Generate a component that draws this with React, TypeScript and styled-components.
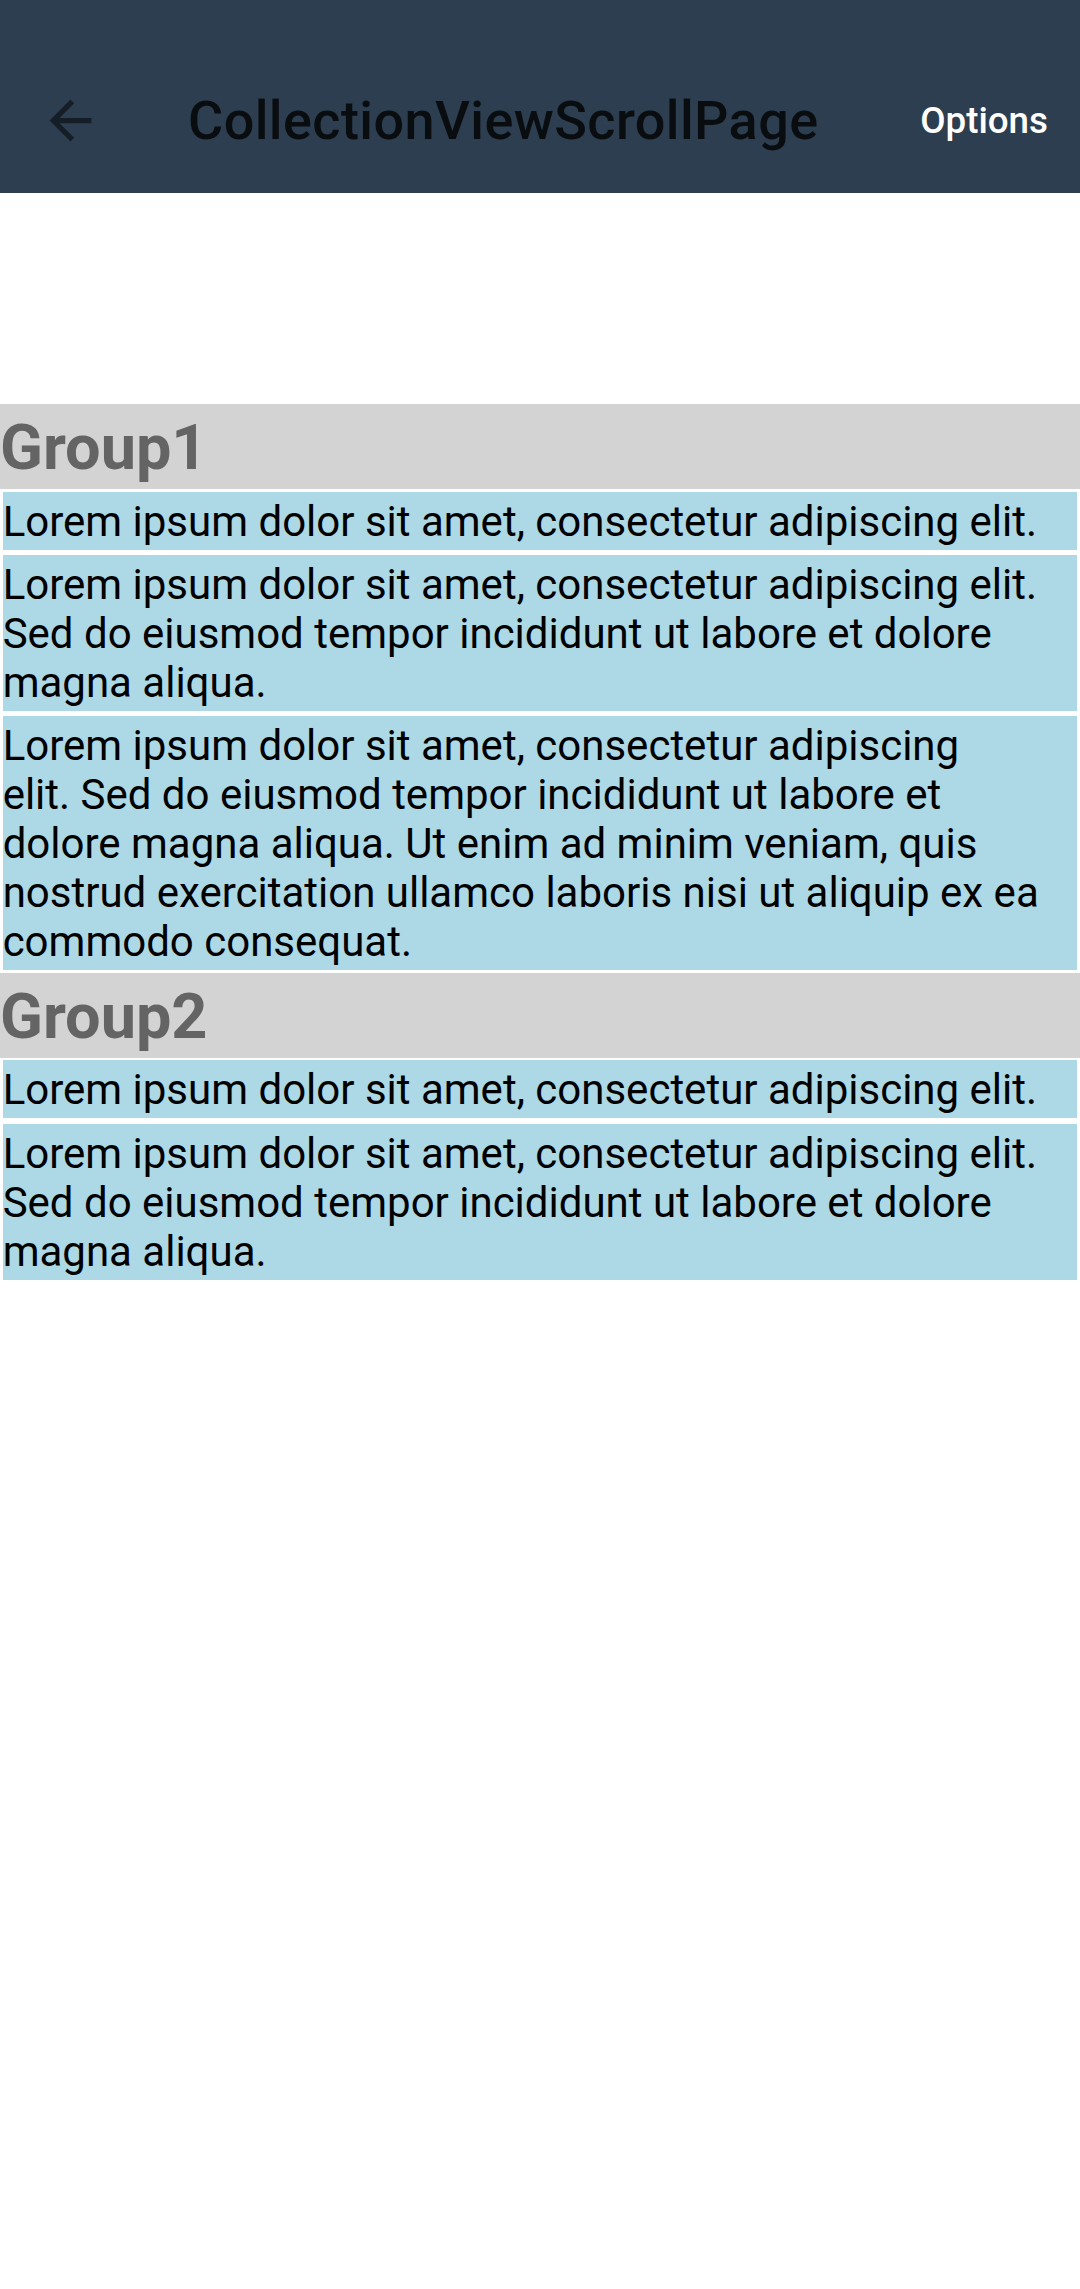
import React from "react";
import styled, { createGlobalStyle } from "styled-components";

const GlobalStyle = createGlobalStyle`
  html, body {
    margin: 0;
    padding: 0;
    background: #ffffff;
    font-family: Roboto, "Noto Sans", "Liberation Sans", sans-serif;
  }
  * { box-sizing: border-box; }
`;

const Page = styled.div`
  width: 1080px;
  min-height: 2289px;
  background: #ffffff;
  display: flex;
  flex-direction: column;
`;

const AppBar = styled.header`
  background: #2d3e50;
  padding-top: 48px;
`;

const Toolbar = styled.div`
  height: 145px;
  display: flex;
  align-items: center;
  padding-left: 39px;
  padding-right: 32px;
`;

const NavButton = styled.div`
  width: 63px;
  height: 63px;
  display: flex;
  align-items: center;
  justify-content: center;
  flex-shrink: 0;
`;

const Title = styled.h1`
  flex: 1;
  margin: 0 0 0 86px;
  font-family: Roboto, "Noto Sans", sans-serif;
  font-weight: 500;
  font-size: 54px;
  letter-spacing: 0.4px;
  line-height: 64px;
  color: #0a0d10;
  white-space: nowrap;
`;

const MenuText = styled.span`
  font-family: Roboto, "Noto Sans", sans-serif;
  font-weight: 500;
  font-size: 36.75px;
  line-height: 44px;
  color: #ffffff;
`;

const List = styled.main`
  display: flex;
  flex-direction: column;
  padding-top: 211px;
`;

const GroupHeader = styled.div`
  height: 85px;
  padding-top: 2px;
  background: #d3d3d3;
  color: #646464;
  font-family: Roboto, "Noto Sans", sans-serif;
  font-weight: 700;
  font-size: 63px;
  line-height: 83px;
  white-space: nowrap;
`;

const Items = styled.div`
  display: flex;
  flex-direction: column;
  gap: 5.25px;
  padding: 2.625px;
`;

const Item = styled.div`
  background: #add8e6;
  color: #000000;
  font-family: Roboto, "Noto Sans", sans-serif;
  font-weight: 400;
  font-size: 42px;
  line-height: 49px;
  padding: 5px 0 4px 0;
  white-space: nowrap;
`;

const short = ["Lorem ipsum dolor sit amet, consectetur adipiscing elit."];
const medium = [
  "Lorem ipsum dolor sit amet, consectetur adipiscing elit.",
  "Sed do eiusmod tempor incididunt ut labore et dolore",
  "magna aliqua.",
];
const long = [
  "Lorem ipsum dolor sit amet, consectetur adipiscing",
  "elit. Sed do eiusmod tempor incididunt ut labore et",
  "dolore magna aliqua. Ut enim ad minim veniam, quis",
  "nostrud exercitation ullamco laboris nisi ut aliquip ex ea",
  "commodo consequat.",
];

const groups: { name: string; items: string[][] }[] = [
  { name: "Group1", items: [short, medium, long] },
  { name: "Group2", items: [short, medium] },
];

const BackArrow = () => (
  <svg width="63" height="63" viewBox="0 0 24 24" aria-hidden="true">
    <path
      d="M20 11H7.83l5.59-5.59L12 4l-8 8 8 8 1.41-1.41L7.83 13H20v-2z"
      fill="#151d27"
    />
  </svg>
);

export default function App() {
  return (
    <>
      <GlobalStyle />
      <Page>
        <AppBar>
          <Toolbar>
            <NavButton>
              <BackArrow />
            </NavButton>
            <Title>CollectionViewScrollPage</Title>
            <MenuText>Options</MenuText>
          </Toolbar>
        </AppBar>
        <List>
          {groups.map((g) => (
            <section key={g.name}>
              <GroupHeader>{g.name}</GroupHeader>
              <Items>
                {g.items.map((lines, i) => (
                  <Item key={i}>
                    {lines.map((l, j) => (
                      <React.Fragment key={j}>
                        {j > 0 && <br />}
                        {l}
                      </React.Fragment>
                    ))}
                  </Item>
                ))}
              </Items>
            </section>
          ))}
        </List>
      </Page>
    </>
  );
}
